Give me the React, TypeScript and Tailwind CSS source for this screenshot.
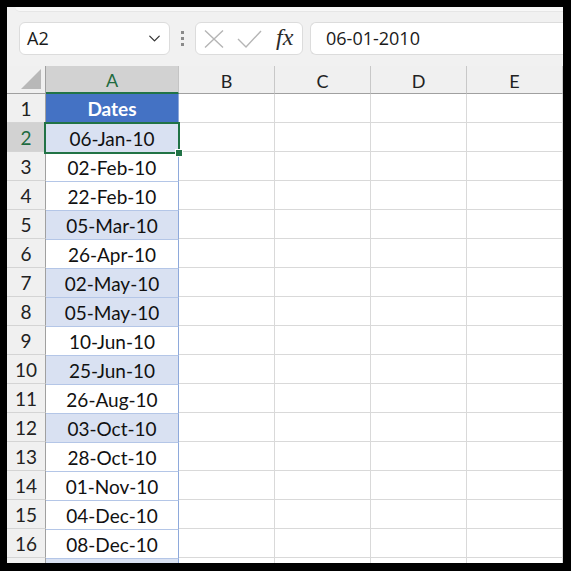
import { ChevronDown } from "lucide-react";

const rows: { date: string; hl: boolean }[] = [
  { date: "06-Jan-10", hl: true },
  { date: "02-Feb-10", hl: false },
  { date: "22-Feb-10", hl: false },
  { date: "05-Mar-10", hl: true },
  { date: "26-Apr-10", hl: false },
  { date: "02-May-10", hl: true },
  { date: "05-May-10", hl: true },
  { date: "10-Jun-10", hl: false },
  { date: "25-Jun-10", hl: true },
  { date: "26-Aug-10", hl: false },
  { date: "03-Oct-10", hl: true },
  { date: "28-Oct-10", hl: false },
  { date: "01-Nov-10", hl: false },
  { date: "04-Dec-10", hl: false },
  { date: "08-Dec-10", hl: false },
  { date: "", hl: true },
];

const cols = ["B", "C", "D", "E"];
const cellFont = { fontFamily: "Lato, 'Noto Sans', sans-serif" };

export default function App() {
  return (
    <div className="w-[571px] h-[571px] bg-black pl-[7px] pt-[7px] pr-[8px] pb-[8px]">
      <div className="w-full h-full bg-white overflow-hidden flex flex-col" style={{ fontFamily: "'Open Sans', 'Noto Sans', sans-serif" }}>
        {/* Formula bar */}
        <div className="h-[59px] shrink-0 bg-[#f1f1f1] relative flex items-start pt-[15px] pl-[12px] gap-[8px]">
          <div className="absolute top-0 left-[8px] right-0 h-[5px] bg-[#f8f8f8] rounded-bl-[8px] border-b border-[#e6e6e6]" />
          <div className="w-[151px] h-[33px] bg-white border border-[#dcdcdc] rounded-[6px] flex items-center justify-between pl-[7px] pr-[5px]">
            <span className="text-[18px] text-[#1a1a1a]">A2</span>
            <ChevronDown className="w-[19px] h-[19px] text-[#333]" strokeWidth={1.6} />
          </div>
          <div className="flex flex-col gap-[3px] pt-[9px] px-[3px]">
            <span className="w-[3px] h-[3px] bg-[#8a8a8a]" />
            <span className="w-[3px] h-[3px] bg-[#8a8a8a]" />
            <span className="w-[3px] h-[3px] bg-[#8a8a8a]" />
          </div>
          <div className="w-[108px] h-[33px] bg-white border border-[#dcdcdc] rounded-[6px] flex items-center pl-[8px] gap-[13px]">
            <svg width="20" height="18" viewBox="0 0 20 18" fill="none" stroke="#b5b5b5" strokeWidth="1.4">
              <path d="M1 0.5 L19 17.5 M19 0.5 L1 17.5" />
            </svg>
            <svg width="25" height="18" viewBox="0 0 25 18" fill="none" stroke="#b5b5b5" strokeWidth="1.4">
              <path d="M1 9 L9 17 L24 1" />
            </svg>
            <span className="text-[24px] italic text-[#2a2a2a] -mt-[4px] ml-[1px]" style={{ fontFamily: "'Liberation Serif', serif" }}>fx</span>
          </div>
          <div className="flex-1 h-[33px] bg-white border border-[#dcdcdc] border-r-0 rounded-l-[6px] flex items-center pl-[15px] ml-[-1px]">
            <span className="text-[18px] text-[#1a1a1a]">06-01-2010</span>
          </div>
        </div>

        {/* Grid */}
        <div className="grid grid-cols-[39px_133px_96px_96px_96px_96px] grid-rows-[28px] auto-rows-[29px]" style={cellFont}>
          {/* header row */}
          <div className="bg-[#f0f0f0] border-b border-r border-[#a0a0a0] relative">
            <div
              className="absolute right-[4px] bottom-[4px] w-[20px] h-[20px] bg-[#b8b8b8]"
              style={{ clipPath: "polygon(100% 0, 100% 100%, 0 100%)" }}
            />
          </div>
          <div className="bg-[#d2d2d2] border-b-2 border-[#217346] border-r border-r-[#c4c4c4] flex items-center justify-center text-[18px] text-[#1e6b40] pt-[3px]">
            A
          </div>
          {cols.map((c) => (
            <div key={c} className="bg-[#f0f0f0] border-b border-[#a0a0a0] border-r border-r-[#c8c8c8] flex items-center justify-center text-[18px] text-[#222] pt-[3px]">
              {c}
            </div>
          ))}

          {/* row 1 */}
          <div className="bg-[#f0f0f0] border-r border-[#a0a0a0] border-b border-b-[#d4d4d4] flex items-center justify-center text-[19px] text-[#222] pt-[2px]">1</div>
          <div className="bg-[#4472c4] border-r border-[#8ea9db] flex items-center justify-center text-[19px] font-bold text-white pt-[2px]">Dates</div>
          {cols.map((c) => (
            <div key={c} className="border-r border-b border-[#d9d9d9]" />
          ))}

          {rows.map((r, i) => {
            const n = i + 2;
            const sel = n === 2;
            return [
              <div
                key={`h${n}`}
                className={`${sel ? "bg-[#d2d2d2] text-[#1e6b40]" : "bg-[#f0f0f0] text-[#222]"} border-r border-[#a0a0a0] border-b border-b-[#d4d4d4] flex items-center justify-center text-[19px] pt-[2px]`}
              >
                {n < 17 ? n : ""}
              </div>,
              <div
                key={`a${n}`}
                className={`${r.hl ? "bg-[#d9e1f2]" : "bg-white"} border-r border-[#8ea9db] border-t border-t-[#b4c6e7] flex items-center justify-center text-[19px] text-[#111] pt-[2px] ${sel ? "relative z-10" : "relative"}`}
              >
                {r.date}
                {sel && (
                  <>
                    <div className="absolute inset-[-2px] border-2 border-[#217346]" />
                    <div className="absolute right-[-5px] bottom-[-5px] w-[8px] h-[8px] bg-[#217346] border border-white" />
                  </>
                )}
              </div>,
              ...cols.map((c) => <div key={`${c}${n}`} className="border-r border-b border-[#d9d9d9]" />),
            ];
          })}
        </div>
      </div>
    </div>
  );
}
